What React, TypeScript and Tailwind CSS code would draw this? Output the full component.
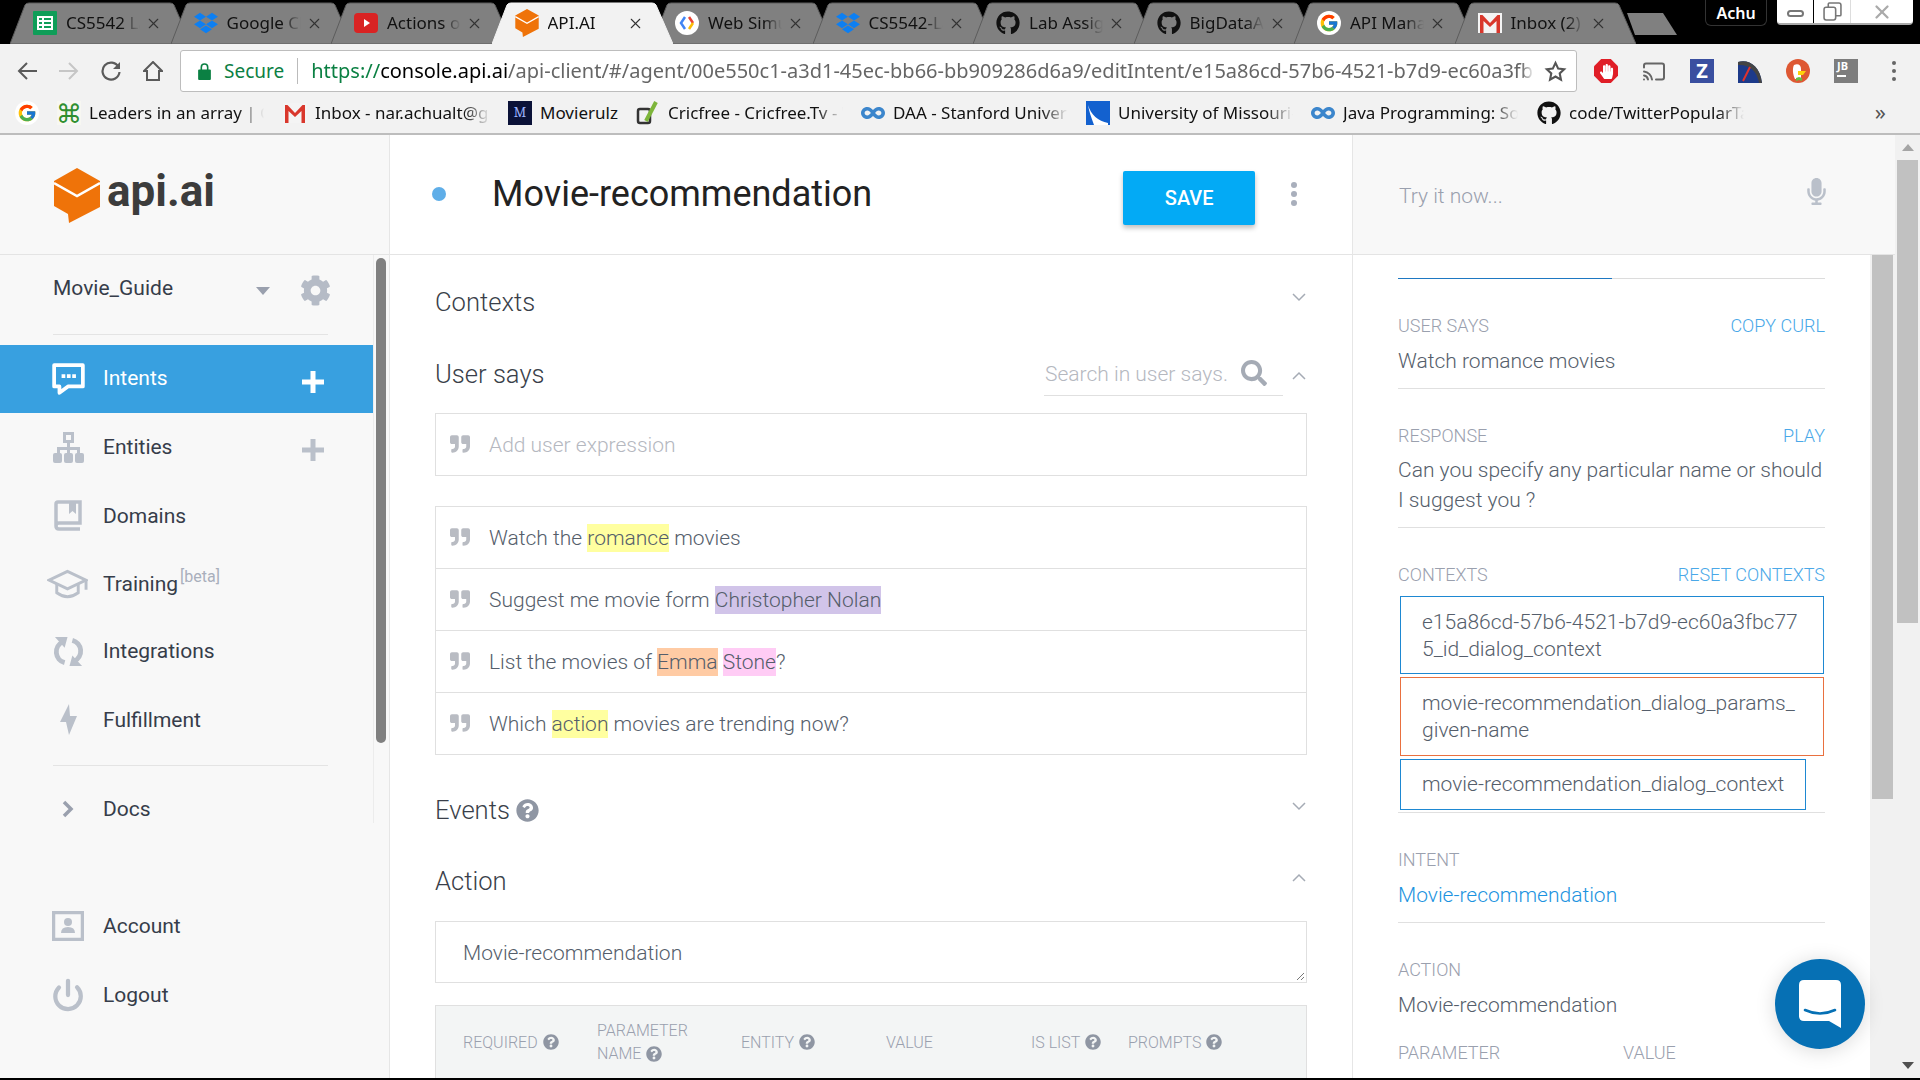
import type { ReactNode } from "react";
import { Cast, Power, X } from "lucide-react";
import { FaCog, FaDropbox, FaGithub, FaHandPaper, FaInfinity, FaMicrophone, FaQuestionCircle, FaQuoteRight, FaSearch } from "react-icons/fa";
import { FcGoogle } from "react-icons/fc";

function CubeLogo({ className }: { className: string }) {
  return (
    <svg viewBox="0 0 46 55" className={className}>
      <path d="M23 0 46 13V39L15 55 14 46 0 38V13Z" fill="#ef7309" />
      <path d="M0 15 23 28 46 15" fill="none" stroke="#fff" strokeWidth="2.5" />
    </svg>
  );
}

function GoogleBadge() {
  return (
    <span className="flex h-6 w-6 items-center justify-center rounded-full bg-white">
      <FcGoogle size={20} />
    </span>
  );
}

function GmailIcon() {
  return (
    <svg viewBox="0 0 24 20" className="h-[20px] w-6">
      <rect width="24" height="20" fill="#f4f4f4" />
      <path d="M2 20V2h2.500L12 10l7.500-8H22v18h-3.500V8L12 14 5.500 8v12Z" fill="#d9372c" />
    </svg>
  );
}

const tabs: { label: string; icon: ReactNode; active?: boolean }[] = [
  {
    label: "CS5542 Lab",
    icon: (
      <svg viewBox="0 0 24 24" className="h-6 w-6">
        <rect width="24" height="24" rx="1" fill="#0f9d58" />
        <path d="M5 6h14v12H5Zm0 4h14M5 14h14M10 6v12" fill="none" stroke="#fff" strokeWidth="2" />
      </svg>
    ),
  },
  { label: "Google Cloud", icon: <FaDropbox size={24} color="#0d7ff2" /> },
  {
    label: "Actions on",
    icon: (
      <svg viewBox="0 0 24 24" className="h-6 w-6">
        <rect y="2" width="24" height="20" rx="4" fill="#d92323" />
        <path d="M10 8v8l6-4Z" fill="#fff" />
      </svg>
    ),
  },
  { label: "API.AI", icon: <CubeLogo className="h-7 w-6" />, active: true },
  {
    label: "Web Simulator",
    icon: (
      <span className="flex h-6 w-6 items-center justify-center rounded-full bg-white">
        <svg viewBox="0 0 16 16" className="h-4 w-4">
          <path d="M6 2 2 8l4 6" fill="none" stroke="#4285f4" strokeWidth="2.500" />
          <path d="M10 2l4 6" fill="none" stroke="#ea4335" strokeWidth="2.500" />
          <path d="M14 8l-4 6" fill="none" stroke="#fbbc05" strokeWidth="2.500" />
        </svg>
      </span>
    ),
  },
  { label: "CS5542-Lab", icon: <FaDropbox size={24} color="#0d7ff2" /> },
  { label: "Lab Assignment", icon: <FaGithub size={24} color="#111" /> },
  { label: "BigDataAnalytics", icon: <FaGithub size={24} color="#111" /> },
  { label: "API Manager", icon: <GoogleBadge /> },
  { label: "Inbox (2) - nar", icon: <GmailIcon /> },
];

const bookmarks: { label: string; width: string; icon: ReactNode }[] = [
  {
    label: "Leaders in an array | GeeksforGeeks",
    width: "w-[226px]",
    icon: <span className="flex h-6 w-6 items-center justify-center bg-[#f7f7f2] text-[26px] leading-none text-[#2f8f2f]">⌘</span>,
  },
  { label: "Inbox - nar.achualt@gmail.com", width: "w-[225px]", icon: <GmailIcon /> },
  {
    label: "Movierulz",
    width: "w-[128px]",
    icon: <span className="flex h-6 w-6 items-center justify-center bg-[#0b1238] font-serif text-[14px] text-[#9db4ff]">M</span>,
  },
  {
    label: "Cricfree - Cricfree.Tv - Watch",
    width: "w-[225px]",
    icon: (
      <svg viewBox="0 0 24 24" className="h-6 w-6">
        <rect x="2" y="8" width="12" height="14" rx="2" fill="none" stroke="#333" strokeWidth="2.500" />
        <path d="M10 20 20 1" fill="none" stroke="#7db53a" strokeWidth="4" />
      </svg>
    ),
  },
  { label: "DAA - Stanford University", width: "w-[225px]", icon: <FaInfinity size={24} color="#3c86cc" /> },
  {
    label: "University of Missouri-Kansas",
    width: "w-[225px]",
    icon: (
      <svg viewBox="0 0 24 24" className="h-6 w-6">
        <rect width="24" height="24" fill="#1361cf" />
        <path d="M2 4c3 10 10 16 20 18L22 24H8C5 16 3 10 2 4Z" fill="#fff" />
      </svg>
    ),
  },
  { label: "Java Programming: Solving", width: "w-[226px]", icon: <FaInfinity size={24} color="#3c86cc" /> },
  { label: "code/TwitterPopularTags", width: "w-[220px]", icon: <FaGithub size={24} color="#111" /> },
];

function Tab({ label, icon, active }: { label: string; icon: ReactNode; active?: boolean }) {
  return (
    <div className={`relative -mr-[20.5px] flex h-[42px] w-[181px] shrink-0 items-center pl-[23px] pr-[29px] ${active ? "z-10" : ""}`}>
      <svg viewBox="0 0 181 42" className="absolute inset-0 h-full w-full">
        <path
          d="M0 42 15 3Q16 1 19 1H160Q163 1 164 3L181 42Z"
          fill={active ? "#f2f2f2" : "#808080"}
          stroke={active ? "#f2f2f2" : "#5c5c5c"}
        />
      </svg>
      <span className="relative flex w-6 shrink-0 justify-center">{icon}</span>
      <span className="relative ml-[9px] w-[74px] overflow-hidden whitespace-nowrap text-[17px] text-[#111] [mask-image:linear-gradient(90deg,#000_75%,transparent)]">
        {label}
      </span>
      <X size={17} strokeWidth={1.5} className="relative ml-auto text-[#333]" />
    </div>
  );
}

function ExtIcon({ children }: { children: ReactNode }) {
  return <span className="flex h-6 w-6 items-center justify-center">{children}</span>;
}

function BrowserChrome() {
  return (
    <header className="shrink-0 font-['Noto_Sans',sans-serif]">
      <div className="flex h-[44px] items-start bg-black pl-[10px] pt-[2px]">
        {tabs.map((t) => (
          <Tab key={t.label} label={t.label} icon={t.icon} active={t.active} />
        ))}
        <svg viewBox="0 0 50 24" className="ml-[12px] mt-[10px] h-6 w-[50px] shrink-0">
          <path d="M0 1H36L50 23H8Z" fill="#808080" />
        </svg>
        <span className="ml-[28px] flex h-[26px] w-[62px] shrink-0 items-center justify-center rounded-b-md border border-t-0 border-[#333] text-[16px] font-semibold text-white -mt-[2px]">
          Achu
        </span>
        <div className="ml-[10px] flex h-[25px] w-[136px] shrink-0 -mt-[2px] overflow-hidden rounded-b-sm border-b-2 border-[#aaa] bg-white text-[#666]">
          <span className="flex w-[37px] items-center justify-center border-r border-black">
            <span className="mt-1 h-[7px] w-[17px] rounded-sm border-2 border-[#777]" />
          </span>
          <span className="flex w-[37px] items-center justify-center border-r border-[#ddd]">
            <svg viewBox="0 0 18 18" className="h-[19px] w-[19px]" fill="none" stroke="#777" strokeWidth="1.500">
              <rect x="1" y="5" width="11" height="12" rx="2" />
              <path d="M5 5V2q0-1 1-1h9q2 0 2 2v9q0 1-1 1h-4" />
            </svg>
          </span>
          <span className="flex flex-1 items-center justify-center">
            <X size={22} strokeWidth={2.5} className="text-[#aaa]" />
          </span>
        </div>
      </div>
      <div className="flex h-[54px] items-center bg-[#f2f2f2]">
        <div className="flex w-[180px] shrink-0 items-center pl-[17px] text-[#5a5a5a]">
          <svg viewBox="0 0 20 20" className="h-5 w-5" fill="none" stroke="currentColor" strokeWidth="2">
            <path d="M20 10H2M10 2l-8 8 8 8" />
          </svg>
          <svg viewBox="0 0 20 20" className="ml-[22px] h-5 w-5" fill="none" stroke="#c6c6c6" strokeWidth="2">
            <path d="M0 10H18M10 2l8 8-8 8" />
          </svg>
          <svg viewBox="0 0 20 20" className="ml-[22px] h-5 w-5" fill="none" stroke="currentColor" strokeWidth="2.200">
            <path d="M17.500 6A8.500 8.500 0 1 0 18.500 11" />
            <path d="M19 1v7h-7Z" fill="currentColor" stroke="none" />
          </svg>
          <svg viewBox="0 0 20 20" className="ml-[22px] h-5 w-5" fill="none" stroke="currentColor" strokeWidth="2">
            <path d="M1 10 10 1l9 9h-3v9H4v-9Z" />
          </svg>
        </div>
        <div className="flex h-[42px] w-[1397px] shrink-0 items-center rounded-[3px] border border-[#bdbdbd] bg-white pl-[17px] pr-[9px]">
          <svg viewBox="0 0 12 16" className="h-[17px] w-[13px] shrink-0">
            <path d="M3 7V4a3 3 0 0 1 6 0v3" fill="none" stroke="#0b8043" strokeWidth="1.500" />
            <rect y="6" width="12" height="10" rx="1" fill="#0b8043" />
          </svg>
          <span className="ml-[13px] text-[19px] text-[#0b8043]">Secure</span>
          <span className="ml-[13px] h-[26px] w-px bg-[#bbb]" />
          <span className="ml-[13px] w-[1223px] overflow-hidden whitespace-nowrap text-[20px] text-[#666] [mask-image:linear-gradient(90deg,#000_99%,transparent)]">
            <span className="text-[#0b8043]">https://</span>
            <span className="text-black">console.api.ai</span>
            /api-client/#/agent/00e550c1-a3d1-45ec-bb66-bb909286d6a9/editIntent/e15a86cd-57b6-4521-b7d9-ec60a3fbc775
          </span>
          <svg viewBox="0 0 24 24" className="ml-auto h-[23px] w-[23px] shrink-0" fill="none" stroke="#555" strokeWidth="2.200">
            <path d="m12 3 2.800 6 6.200.7-4.600 4.300 1.300 6.500L12 17.200 6.300 20.500 7.600 14 3 9.700 9.200 9Z" />
          </svg>
        </div>
        <div className="flex flex-1 items-center gap-6 pl-[17px]">
          <ExtIcon>
            <span className="flex h-6 w-6 items-center justify-center bg-[#e01e27] text-white [clip-path:polygon(30%_0,70%_0,100%_30%,100%_70%,70%_100%,30%_100%,0_70%,0_30%)]">
              <FaHandPaper size={15} />
            </span>
          </ExtIcon>
          <ExtIcon>
            <Cast size={25} strokeWidth={2} className="text-[#666]" />
          </ExtIcon>
          <ExtIcon>
            <span className="flex h-6 w-6 items-center justify-center bg-[#3a4fa0] text-[20px] font-bold leading-none text-white">Z</span>
          </ExtIcon>
          <ExtIcon>
            <svg viewBox="0 0 24 24" className="h-6 w-6">
              <path d="M0 24V3C10 0 22 6 24 24Z" fill="#1d3a8a" />
              <path d="M0 3C10 0 22 6 24 24h-3C19 11 10 5 0 6Z" fill="#444" />
              <path d="M5 22 12 8" stroke="#e0322d" strokeWidth="2" />
            </svg>
          </ExtIcon>
          <ExtIcon>
            <svg viewBox="0 0 24 24" className="h-6 w-6">
              <circle cx="12" cy="12" r="12" fill="#de5833" />
              <path d="M8 6c4-2 7 0 7 4v10H9C7 16 6 10 8 6Z" fill="#fff" />
              <path d="M12 12h8l-3 4h-5Z" fill="#fdd20a" />
              <path d="M10 19l3-1 3 1v3l-3-1-3 1Z" fill="#65bc46" />
            </svg>
          </ExtIcon>
          <ExtIcon>
            <span className="relative flex h-6 w-6 flex-col bg-[#7d7d7d] pl-[3px] text-[11px] font-bold leading-[14px] text-white">
              JB
              <span className="mt-[2px] h-[2px] w-[9px] bg-white" />
            </span>
          </ExtIcon>
          <span className="ml-[10px] flex flex-col gap-[4px]">
            <span className="h-[4px] w-[4px] rounded-full bg-[#666]" />
            <span className="h-[4px] w-[4px] rounded-full bg-[#666]" />
            <span className="h-[4px] w-[4px] rounded-full bg-[#666]" />
          </span>
        </div>
      </div>
      <div className="flex h-[37px] items-center border-b-2 border-[#bdbdbd] bg-[#f2f2f2] pb-[6px] pl-[15px]">
        <span className="mr-[18px] flex w-6 shrink-0">
          <GoogleBadge />
        </span>
        {bookmarks.map((b) => (
          <div key={b.label} className={`flex shrink-0 items-center ${b.width}`}>
            <span className="flex h-6 w-6 shrink-0 items-center justify-center">{b.icon}</span>
            <span
              className={`ml-2 max-w-[175px] overflow-hidden whitespace-nowrap text-[17px] text-[#111] ${
                b.label === "Movierulz" ? "" : "[mask-image:linear-gradient(90deg,#000_85%,transparent)]"
              }`}
            >
              {b.label}
            </span>
          </div>
        ))}
        <span className="-mt-1 ml-auto mr-[34px] text-[22px] leading-none text-[#555]">»</span>
      </div>
    </header>
  );
}

const iconColor = "#bac0ca";

function PlusIcon({ color }: { color: string }) {
  return (
    <svg viewBox="0 0 22 22" className="mt-[5px] h-[22px] w-[22px]">
      <path d="M8.500 0h5v8.500H22v5h-8.500V22h-5v-8.500H0v-5h8.500Z" fill={color} />
    </svg>
  );
}

function NavRow({ icon, label, sup, plus, active, height = "h-[68px]" }: { icon: ReactNode; label: string; sup?: string; plus?: boolean; active?: boolean; height?: string }) {
  return (
    <div className={`flex items-center pl-[48px] pr-[49px] ${height} ${active ? "bg-[#38a0e0] text-white" : "text-[#363d4a]"}`}>
      <span className="flex w-[40px] shrink-0 justify-center">{icon}</span>
      <span className={`text-[21px] leading-7 ${active ? "ml-[15px] -mt-[2px]" : "ml-[15px]"}`}>{label}</span>
      {sup && <span className="ml-[2px] -mt-[13px] text-[16px] text-[#a9afbc]">{sup}</span>}
      {plus && (
        <span className="ml-auto">
          <PlusIcon color={active ? "#fff" : iconColor} />
        </span>
      )}
    </div>
  );
}

function Sidebar() {
  return (
    <aside className="flex w-[390px] shrink-0 flex-col border-r border-[#e6e6e6] bg-[#f8f8f8]">
      <div className="flex h-[120px] shrink-0 items-center gap-[7px] border-b border-[#e4e4e4] pl-[54px] pt-[2px]">
        <CubeLogo className="h-[55px] w-[46px]" />
        <span className="-mt-[10px] font-['Roboto',sans-serif] text-[44px] font-bold leading-none text-[#3c3c3c]">api.ai</span>
      </div>
      <div className="flex h-[568px] shrink-0">
        <nav className="w-[373px] shrink-0">
          <div className="ml-[53px] mr-[45px] flex h-[80px] items-center border-b border-[#e4e4e4] pb-[12px]">
            <span className="text-[21px] text-[#363d4a]">Movie_Guide</span>
            <svg viewBox="0 0 14 8" className="ml-auto mr-[30px] mt-[4px] h-2 w-[14px]">
              <path d="M0 0h14L7 8Z" fill="#9aa0ae" />
            </svg>
            <FaCog size={31} color="#b5bbc6" className="-mr-[3px] mt-[3px]" />
          </div>
          <div className="mt-[10px]" />
          <NavRow
            active
            plus
            height="h-[68px]"
            label="Intents"
            icon={
              <svg viewBox="0 0 31 31" className="h-[33px] w-[33px]">
                <path d="M2 2h27v20H15l-8 6v-6H2Z" fill="none" stroke="#fff" strokeWidth="3.500" strokeLinejoin="round" />
                <path d="M9 10.500h3.500V14H9Zm5 0h3.500V14H14Zm5 0h3.500V14H19Z" fill="#fff" />
              </svg>
            }
          />
          <NavRow
            plus
            label="Entities"
            icon={
              <svg viewBox="0 0 31 31" className="h-[31px] w-[31px]" fill={iconColor}>
                <path fillRule="evenodd" d="M10 0h11v11h-4v4h10v6h-3v-3H17v3h-3v-3H7v3H4v-6h10v-4h-4Zm3 3v5h5V3Z" />
                <rect y="21" width="9" height="10" rx="2" />
                <rect x="11" y="21" width="9" height="10" rx="2" />
                <rect x="22" y="21" width="9" height="10" rx="2" />
              </svg>
            }
          />
          <NavRow
            height="h-[69px]"
            label="Domains"
            icon={
              <svg viewBox="0 0 28 31" className="h-[31px] w-[28px]" fill="none" stroke={iconColor} strokeWidth="3.500">
                <path d="M2 26V4q0-2 2-2h22v21H5q-3 0-3 3t3 3h21" />
                <path d="M15 3h7v11l-3.500-3L15 14Z" fill={iconColor} stroke="none" />
              </svg>
            }
          />
          <NavRow
            height="h-[67px]"
            label="Training"
            sup="[beta]"
            icon={
              <svg viewBox="0 0 42 30" className="-ml-[1px] h-[30px] w-[42px]" fill="none" stroke={iconColor} strokeWidth="3">
                <path d="M21 2 2 11l19 9 19-9Z" />
                <path d="M10 15v9q11 8 22 0v-9M40 11v10" />
              </svg>
            }
          />
          <NavRow
            label="Integrations"
            icon={
              <svg viewBox="0 0 32 32" className="h-[31px] w-[31px]">
                <path d="M10 6A11.500 11.500 0 0 0 12 27.500" fill="none" stroke={iconColor} strokeWidth="5" />
                <path d="M22 26A11.500 11.500 0 0 0 20 4.500" fill="none" stroke={iconColor} strokeWidth="5" />
                <path d="M2 1h13l-3 11ZM30 31H17l3-11Z" fill={iconColor} />
              </svg>
            }
          />
          <NavRow
            height="h-[69px]"
            label="Fulfillment"
            icon={
              <svg viewBox="0 0 17 31" className="h-[31px] w-[17px]">
                <path d="M9 0 0 18h6l3 13 8-19h-7Z" fill={iconColor} />
              </svg>
            }
          />
          <div className="ml-[53px] mr-[45px] mt-[11px] border-t border-[#e4e4e4]" />
          <NavRow
            height="h-[28px] mt-[29px]"
            label="Docs"
            icon={
              <svg viewBox="0 0 12 18" className="h-[18px] w-3" fill="none" stroke="#9aa0ae" strokeWidth="3.500">
                <path d="m2 2 7 7-7 7" />
              </svg>
            }
          />
        </nav>
        <div className="border-l border-[#ececec] pl-[2px] pt-[3px]">
          <div className="h-[485px] w-[10px] rounded-md bg-[#808080]" />
        </div>
      </div>
      <div className="mt-[68px]">
        <NavRow
          height="h-[69px]"
          label="Account"
          icon={
            <svg viewBox="0 0 32 30" className="h-[30px] w-[32px]">
              <rect x="1.500" y="1.500" width="29" height="27" fill="none" stroke={iconColor} strokeWidth="3.500" />
              <circle cx="16" cy="11" r="4" fill={iconColor} />
              <path d="M9 22q0-6 7-6t7 6Z" fill={iconColor} />
            </svg>
          }
        />
        <NavRow height="h-[70px]" label="Logout" icon={<Power size={34} strokeWidth={3} color={iconColor} />} />
      </div>
    </aside>
  );
}

function Chevron({ up, className = "" }: { up?: boolean; className?: string }) {
  return (
    <svg viewBox="0 0 14 9" className={`mr-px h-[9px] w-[14px] shrink-0 ${className}`} fill="none" stroke="#a5abb5" strokeWidth="1.500">
      <path d={up ? "M1 8 7 2l6 6" : "M1 1l6 6 6-6"} />
    </svg>
  );
}

function Help({ size = 16 }: { size?: number }) {
  return <FaQuestionCircle size={size} color="#8f96a3" className="shrink-0" />;
}

const expressions: ReactNode[] = [
  <>
    Watch the <span className="bg-[#ffffa0] py-[2px]">romance</span> movies
  </>,
  <>
    Suggest me movie form <span className="bg-[#d1c4e9] py-[2px]">Christopher Nolan</span>
  </>,
  <>
    List the movies of <span className="bg-[#ffcba4] py-[2px]">Emma</span> <span className="bg-[#ffccf5] py-[2px]">Stone</span>?
  </>,
  <>
    Which <span className="bg-[#ffffa0] py-[2px]">action</span> movies are trending now?
  </>,
];

function TableHead({ children, width }: { children: ReactNode; width: string }) {
  return <div className={`flex shrink-0 items-center gap-[5px] ${width}`}>{children}</div>;
}

function Editor() {
  return (
    <main className="flex w-[963px] shrink-0 flex-col border-r border-[#e6e6e6] bg-white font-light text-[#555e6b]">
      <div className="flex h-[120px] shrink-0 items-center border-b border-[#e4e4e4] pl-[42px]">
        <span className="-mt-[2px] h-[14px] w-[14px] shrink-0 rounded-full bg-[#5faee8]" />
        <h1 className="ml-[46px] -mt-[2px] text-[36px] font-normal text-[#222]">Movie-recommendation</h1>
        <button className="ml-[251px] mt-[7px] h-[54px] w-[132px] rounded-[2px] bg-[#03aaf5] text-[20px] font-medium text-white shadow-[0_3px_5px_rgba(0,0,0,0.25)]">SAVE</button>
        <span className="ml-[36px] -mt-[2px] flex flex-col gap-[3px]">
          <span className="h-[6px] w-[6px] rounded-full bg-[#a9afbc]" />
          <span className="h-[6px] w-[6px] rounded-full bg-[#a9afbc]" />
          <span className="h-[6px] w-[6px] rounded-full bg-[#a9afbc]" />
        </span>
      </div>
      <div className="min-h-0 flex-1 overflow-hidden px-[45px]">
        <div className="mt-[20px] flex h-[56px] items-center justify-between">
          <h2 className="-mt-[2px] text-[25.6px] text-[#3a3f4a]">Contexts</h2>
          <Chevron className="mb-[11px]" />
        </div>
        <div className="mt-[16px] flex h-[56px] items-center">
          <h2 className="-mt-[2px] text-[25.6px] text-[#3a3f4a]">User says</h2>
          <div className="ml-auto flex h-[42px] w-[239px] items-center border-b border-[#e0e0e0] pl-px">
            <span className="text-[21px] text-[#b5b8bf]">Search in user says.</span>
            <FaSearch size={26} color="#a5abb5" className="ml-auto mr-[16px] -mt-[4px]" />
          </div>
          <Chevron up className="ml-[9px]" />
        </div>
        <div className="mt-[10px] flex h-[63px] items-center border border-[#e0e0e0] pl-[14px]">
          <FaQuoteRight size={20} color="#b9bcc3" className="-mt-[2px]" />
          <span className="ml-[19px] mt-[2px] text-[21px] text-[#b5b8bf]">Add user expression</span>
        </div>
        <div className="mt-[30px] border-x border-t border-[#e0e0e0]">
          {expressions.map((e, i) => (
            <div key={i} className="flex h-[62px] items-center border-b border-[#e0e0e0] pl-[14px]">
              <FaQuoteRight size={20} color="#b9bcc3" className="-mt-[2px]" />
              <span className="ml-[19px] mt-[2px] text-[21px]">{e}</span>
            </div>
          ))}
        </div>
        <div className="mt-[27px] flex h-[56px] items-center">
          <h2 className="text-[25.6px] text-[#3a3f4a]">Events</h2>
          <span className="ml-[6px]">
            <Help size={23} />
          </span>
          <Chevron className="mb-[8px] ml-auto" />
        </div>
        <div className="mt-[15px] flex h-[56px] items-center justify-between">
          <h2 className="text-[25.6px] text-[#3a3f4a]">Action</h2>
          <Chevron up className="mb-[7px]" />
        </div>
        <div className="relative mt-[12px] flex h-[62px] items-center border border-[#e0e0e0] pl-[27px]">
          <span className="mt-[3px] text-[21px]">Movie-recommendation</span>
          <svg viewBox="0 0 8 8" className="absolute bottom-[2px] right-[2px] h-2 w-2" stroke="#777" strokeWidth="1">
            <path d="M1 8 8 1M5 8l3-3" />
          </svg>
        </div>
        <div className="mt-[22px] flex h-[80px] items-start border border-[#e0e0e0] bg-[#f3f5f5] pl-[27px] pt-[13px] text-[16px] leading-[23px] text-[#9aa0ae]">
          <div className="flex h-[46px] items-center">
            <TableHead width="w-[134px]">
              REQUIRED <Help />
            </TableHead>
            <div className="w-[144px] shrink-0">
              PARAMETER
              <div className="flex items-center gap-[5px]">
                NAME <Help />
              </div>
            </div>
            <TableHead width="w-[145px]">
              ENTITY <Help />
            </TableHead>
            <TableHead width="w-[145px]">VALUE</TableHead>
            <TableHead width="w-[97px]">
              IS LIST <Help />
            </TableHead>
            <TableHead width="w-[110px]">
              PROMPTS <Help />
            </TableHead>
          </div>
        </div>
      </div>
    </main>
  );
}

function Label({ left, right }: { left: string; right?: string }) {
  return (
    <div className="flex h-5 items-center justify-between pb-[2px] text-[18px]">
      <span className="text-[#9aa0ae]">{left}</span>
      {right && <span className="text-[#4aa8e8]">{right}</span>}
    </div>
  );
}

function ContextBox({ border, height, width = "w-[424px]", children }: { border: string; height: string; width?: string; children: ReactNode }) {
  return <div className={`ml-[2px] flex items-center border pl-[21px] text-[21px] leading-[27px] ${border} ${height} ${width}`}><div>{children}</div></div>;
}

function Arrow({ up }: { up?: boolean }) {
  return (
    <svg viewBox="0 0 12 7" className="h-[7px] w-3">
      <path d={up ? "M0 7h12L6 0Z" : "M0 0h12L6 7Z"} fill={up ? "#a5a5a5" : "#505050"} />
    </svg>
  );
}

function Console() {
  return (
    <section className="flex min-w-0 flex-1 flex-col font-light text-[#555e6b]">
      <div className="flex h-[120px] shrink-0 items-center border-b border-[#e4e4e4] bg-[#f8f8f8] pl-[46px]">
        <span className="mt-[4px] text-[21px] text-[#9aa0ae]">Try it now...</span>
        <FaMicrophone size={27} color="#bac0ca" className="ml-auto mr-[65px] -mt-[6px]" />
      </div>
      <div className="flex min-h-0 flex-1">
        <div className="w-[517px] shrink-0 overflow-hidden bg-white px-[45px]">
          <div className="mt-[23px] flex h-[1px]">
            <div className="w-[214px] bg-[#1e78c2]" />
            <div className="flex-1 bg-[#dcdcdc]" />
          </div>
          <div className="mt-[37px]">
            <Label left="USER SAYS" right="COPY CURL" />
          </div>
          <div className="mt-[10px] h-[30px] text-[21px] leading-[30px]">Watch romance movies</div>
          <div className="mt-[12px] border-t border-[#e0e0e0]" />
          <div className="mt-[37px]">
            <Label left="RESPONSE" right="PLAY" />
          </div>
          <div className="mt-[9px] text-[21px] leading-[30px]">
            Can you specify any particular name or should
            <br />I suggest you ?
          </div>
          <div className="mt-[12px] border-t border-[#e0e0e0]" />
          <div className="mt-[37px]">
            <Label left="CONTEXTS" right="RESET CONTEXTS" />
          </div>
          <div className="mt-[11px]">
            <ContextBox border="border-[#1e88d2] pt-[2px]" height="h-[78px]">
              e15a86cd-57b6-4521-b7d9-ec60a3fbc77
              <br />
              5_id_dialog_context
            </ContextBox>
          </div>
          <div className="mt-[3px]">
            <ContextBox border="border-[#e9703f]" height="h-[79px]">
              movie-recommendation_dialog_params_
              <br />
              given-name
            </ContextBox>
          </div>
          <div className="mt-[3px]">
            <ContextBox border="border-[#1e88d2]" height="h-[51px]" width="w-[406px]">
              movie-recommendation_dialog_context
            </ContextBox>
          </div>
          <div className="mt-[2px] border-t border-[#e0e0e0]" />
          <div className="mt-[37px]">
            <Label left="INTENT" />
          </div>
          <div className="mt-[10px] h-[30px] text-[21px] leading-[30px] text-[#1c93e0]">Movie-recommendation</div>
          <div className="mt-[12px] border-t border-[#e0e0e0]" />
          <div className="mt-[37px]">
            <Label left="ACTION" />
          </div>
          <div className="mt-[10px] h-[30px] text-[21px] leading-[30px]">Movie-recommendation</div>
          <div className="mt-[22px] flex h-5 items-center text-[18px] text-[#9aa0ae]">
            <span className="w-[225px]">PARAMETER</span>
            <span>VALUE</span>
          </div>
        </div>
        <div className="flex-1 bg-[#f1f1f1] pl-[2px]">
          <div className="h-[544px] w-[21px] bg-[#c1c1c1]" />
        </div>
      </div>
    </section>
  );
}

export default function App() {
  return (
    <div className="relative flex h-[1080px] w-[1920px] flex-col overflow-hidden bg-white font-['Roboto',sans-serif]">
      <BrowserChrome />
      <div className="flex min-h-0 flex-1">
        <Sidebar />
        <Editor />
        <Console />
        <div className="flex w-[25px] shrink-0 flex-col items-center bg-[#f1f1f1]">
          <div className="flex h-[25px] items-center">
            <Arrow up />
          </div>
          <div className="h-[463px] w-[21px] bg-[#c1c1c1]" />
          <div className="mb-[9px] mt-auto flex">
            <Arrow />
          </div>
        </div>
      </div>
      <div className="h-[2px] shrink-0 bg-black" />
      <div className="absolute left-[1775px] top-[959px] flex h-[90px] w-[90px] items-center justify-center rounded-full bg-[#0670b4] shadow-[0_2px_20px_rgba(0,0,0,0.15)]">
        <svg viewBox="0 0 42 48" className="h-[48px] w-[42px]">
          <path d="M5 0h32q5 0 5 5v43l-12-7H5q-5 0-5-5V5q0-5 5-5Z" fill="#fff" />
          <path d="M6 30q15 7 30 0" fill="none" stroke="#0670b4" strokeWidth="2.500" strokeLinecap="round" />
        </svg>
      </div>
    </div>
  );
}
